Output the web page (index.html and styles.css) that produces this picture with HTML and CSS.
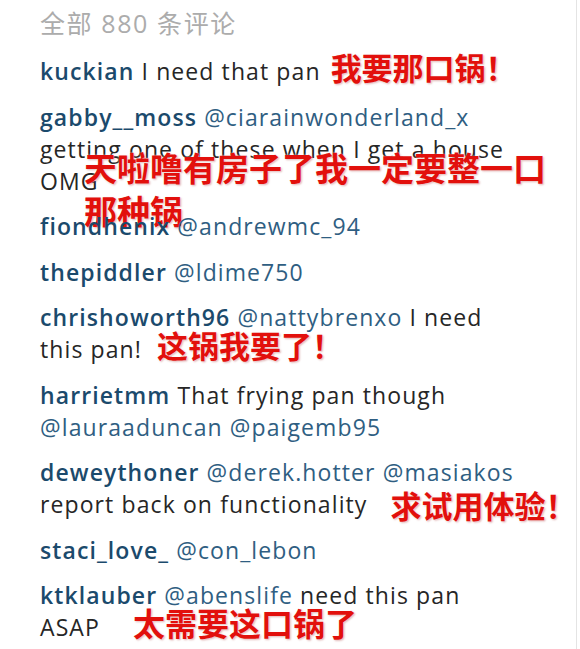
FILE: index.html
```html
<!DOCTYPE html>
<html lang="zh">
<head>
<meta charset="utf-8">
<title>全部 880 条评论</title>
<link rel="stylesheet" href="styles.css">
</head>
<body>
<div class="page">
  <div class="title">全部 880 条评论</div>
  <ul class="comments">
    <li class="comment"><a class="user">kuckian</a> I need that pan<span class="note note-kuckian">我要那口锅！</span></li>
    <li class="comment"><a class="user">gabby__moss</a> <a class="mention">@ciarainwonderland_x</a> getting one of these when I get a house OMG<span class="overlay">天啦噜有房子了我一定要整一口那种锅</span></li>
    <li class="comment"><a class="user">fiondhenix</a> <a class="mention">@andrewmc_94</a></li>
    <li class="comment"><a class="user">thepiddler</a> <a class="mention">@ldime750</a></li>
    <li class="comment"><a class="user">chrishoworth96</a> <a class="mention">@nattybrenxo</a> I need this pan!<span class="note note-pan">这锅我要了！</span></li>
    <li class="comment"><a class="user">harrietmm</a> That frying pan though <a class="mention">@lauraaduncan</a> <a class="mention">@paigemb95</a></li>
    <li class="comment"><a class="user">deweythoner</a> <a class="mention">@derek.hotter</a> <a class="mention">@masiakos</a> report back on functionality<span class="note note-report">求试用体验！</span></li>
    <li class="comment"><a class="user">staci_love_</a> <a class="mention">@con_lebon</a></li>
    <li class="comment"><a class="user">ktklauber</a> <a class="mention">@abenslife</a> need this pan ASAP<span class="note note-asap">太需要这口锅了</span></li>
  </ul>
</div>
</body>
</html>
```

FILE: styles.css
```css
html, body {
  margin: 0;
  padding: 0;
  background: #ffffff;
}

.page {
  box-sizing: border-box;
  width: 577px;
  height: 649px;
  padding: 7px 0 0 40px;
  border-right: 1px solid #e4e4e4;
  overflow: hidden;
  font-family: "Open Sans", "Noto Sans CJK SC", sans-serif;
  color: #262626;
}

.title {
  font-size: 25px;
  line-height: 32px;
  letter-spacing: 1.6px;
  color: #acacac;
  margin-bottom: 16px;
}

.comments {
  list-style: none;
  margin: 0;
  padding: 0;
  width: 478px;
}

.comment {
  position: relative;
  font-size: 23px;
  letter-spacing: 1.1px;
  line-height: 32px;
  margin-bottom: 13.5px;
}

.user {
  color: #1b4a6c;
  font-weight: 600;
}

.mention {
  color: #2f5e82;
}

.note,
.overlay {
  font-family: "Noto Sans CJK SC", sans-serif;
  font-weight: 700;
  letter-spacing: 0;
  color: #e2100c;
  text-shadow: 0 0 2px rgba(255, 255, 255, 0.9), 1px 1px 2px rgba(150, 0, 0, 0.35);
}

/* zero-width sticker so it never changes where the comment wraps */
.note {
  display: inline-block;
  width: 0;
  font-size: 31px;
  line-height: 0;
  white-space: nowrap;
  vertical-align: baseline;
}

.note-kuckian {
  margin-left: 10px;
}

.note-pan {
  margin-left: 15px;
}

.note-report {
  margin-left: 23px;
  position: relative;
  top: 5px;
}

.note-asap {
  margin-left: 33px;
  font-size: 32px;
}

.overlay {
  position: absolute;
  left: 44px;
  top: 45px;
  width: 470px;
  font-size: 33px;
  line-height: 43px;
}
```
